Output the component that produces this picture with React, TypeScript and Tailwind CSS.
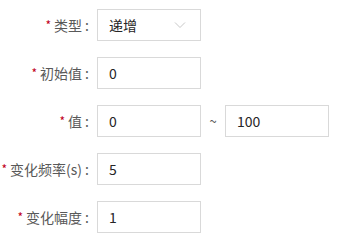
import React from "react";

const font = { fontFamily: '"Noto Sans CJK SC", "Noto Sans", sans-serif' };

function Label({ text }: { text: string }) {
  return (
    <div className="w-[97px] shrink-0 flex items-center justify-end text-[14px] text-[#595959] whitespace-nowrap">
      <span className="text-[#c0001a] mr-[3px] text-[12px]">*</span>
      <span>{text}</span>
      <span className="ml-[3px] mr-[8px]">:</span>
    </div>
  );
}

function Input({ value }: { value: string }) {
  return (
    <div className="w-[104px] h-[32px] border border-[#d9d9d9] bg-white flex items-center px-[11px] text-[14px] text-[#262626]">
      {value}
    </div>
  );
}

export default function App() {
  return (
    <div className="w-[346px] h-[241px] bg-white pt-[9px] flex flex-col gap-[16px]" style={font}>
      <div className="flex items-center h-[32px]">
        <Label text="类型" />
        <div className="w-[104px] h-[32px] border border-[#d9d9d9] bg-white flex items-center justify-between pl-[11px] pr-[14px] text-[14px] text-[#262626]">
          <span>递增</span>
          <svg width="12" height="8" viewBox="0 0 12 8" fill="none">
            <path d="M1 1.5L6 6.5L11 1.5" stroke="#c8c8c8" strokeWidth="1" />
          </svg>
        </div>
      </div>
      <div className="flex items-center h-[32px]">
        <Label text="初始值" />
        <Input value="0" />
      </div>
      <div className="flex items-center h-[32px]">
        <Label text="值" />
        <Input value="0" />
        <div className="w-[24px] text-center text-[13px] text-[#595959]">~</div>
        <Input value="100" />
      </div>
      <div className="flex items-center h-[32px]">
        <Label text="变化频率(s)" />
        <Input value="5" />
      </div>
      <div className="flex items-center h-[32px]">
        <Label text="变化幅度" />
        <Input value="1" />
      </div>
    </div>
  );
}
